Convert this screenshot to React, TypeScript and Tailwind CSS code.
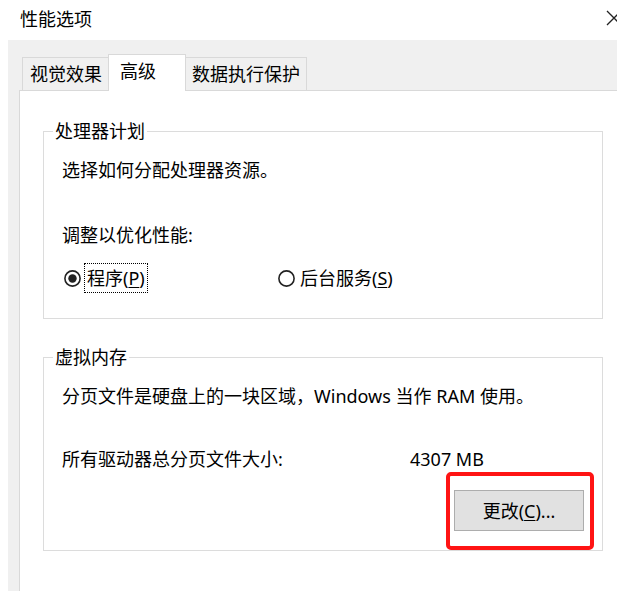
import React from 'react';

const Radio = ({ checked }: { checked?: boolean }) => (
  <svg width="17" height="17" viewBox="0 0 17 17" className="shrink-0">
    <circle cx="8.5" cy="8.5" r="7.6" fill="#fff" stroke="#222" strokeWidth="1.6" />
    {checked && <circle cx="8.5" cy="8.5" r="4.2" fill="#222" />}
  </svg>
);

const App = () => {
  return (
    <div className="w-[617px] h-[591px] bg-white overflow-hidden flex flex-col text-black text-[18px] leading-[24px] font-['Noto_Sans','Noto_Sans_CJK_SC',sans-serif]">
      {/* Title bar */}
      <div className="h-[40px] shrink-0 flex items-start justify-between pt-[7px] pl-[20px]">
        <span>性能选项</span>
        <svg width="16" height="16" viewBox="0 0 16 16" className="mt-[3px] -mr-[5px] shrink-0">
          <path d="M1 1 L15 15 M15 1 L1 15" stroke="#222" strokeWidth="1.3" />
        </svg>
      </div>

      {/* Dialog body */}
      <div className="ml-[8px] flex-1 bg-[#f0f0f0] flex flex-col pt-[14px]">
        {/* Tabs */}
        <div className="ml-[14px] h-[36px] flex items-end">
          <div className="w-[86px] h-[33px] border-l border-t border-[#d9d9d9] bg-[#f0f0f0] pl-[7px] leading-[32px]">
            视觉效果
          </div>
          <div className="relative z-10 w-[78px] h-[37px] -mb-px self-start border-l border-t border-r border-[#d9d9d9] bg-white pl-[11px] leading-[33px]">
            高级
          </div>
          <div className="w-[121px] h-[33px] border-t border-r border-[#d9d9d9] bg-[#f0f0f0] pl-[6px] leading-[32px]">
            数据执行保护
          </div>
        </div>

        {/* Tab panel */}
        <div className="ml-[11px] flex-1 bg-white border-l border-t border-[#d9d9d9] pl-[23px]">
          {/* 处理器计划 */}
          <fieldset className="mt-[28px] w-[560px] border border-[#dcdcdc] px-[18px] pb-[25px]">
            <legend className="-ml-[9px] px-[2px]">处理器计划</legend>
            <p className="mt-[15px]">选择如何分配处理器资源。</p>
            <p className="mt-[41px]">调整以优化性能:</p>
            <div className="mt-[16px] h-[30px] flex items-center">
              <div className="w-[216px] flex items-center">
                <span className="ml-[2px]">
                  <Radio checked />
                </span>
                <span className="ml-[3px] h-[30px] px-[2px] border border-dotted border-black flex items-center">
                  程序(<span className="underline underline-offset-2">P</span>)
                </span>
              </div>
              <div className="flex items-center">
                <Radio />
                <span className="ml-[5px]">
                  后台服务(<span className="underline underline-offset-2">S</span>)
                </span>
              </div>
            </div>
          </fieldset>

          {/* 虚拟内存 */}
          <fieldset className="mt-[26px] w-[560px] border border-[#dcdcdc] pl-[18px] flex flex-col">
            <legend className="-ml-[9px] px-[2px]">虚拟内存</legend>
            <p className="mt-[15px]">分页文件是硬盘上的一块区域，Windows 当作 RAM 使用。</p>
            <div className="mt-[39px] flex">
              <span className="w-[348px]">所有驱动器总分页文件大小:</span>
              <span>4307 MB</span>
            </div>
            <div className="mt-[1px] self-end mr-[8px] border-[4px] border-[#ff1414] rounded-[5px] pt-[14px] pb-[15px] pl-[4px] pr-[6px]">
              <button className="w-[130px] h-[41px] bg-[#e1e1e1] border border-[#adadad] flex items-center justify-center">
                更改(<span className="underline underline-offset-2">C</span>)...
              </button>
            </div>
          </fieldset>
        </div>
      </div>
    </div>
  );
};

export default App;
